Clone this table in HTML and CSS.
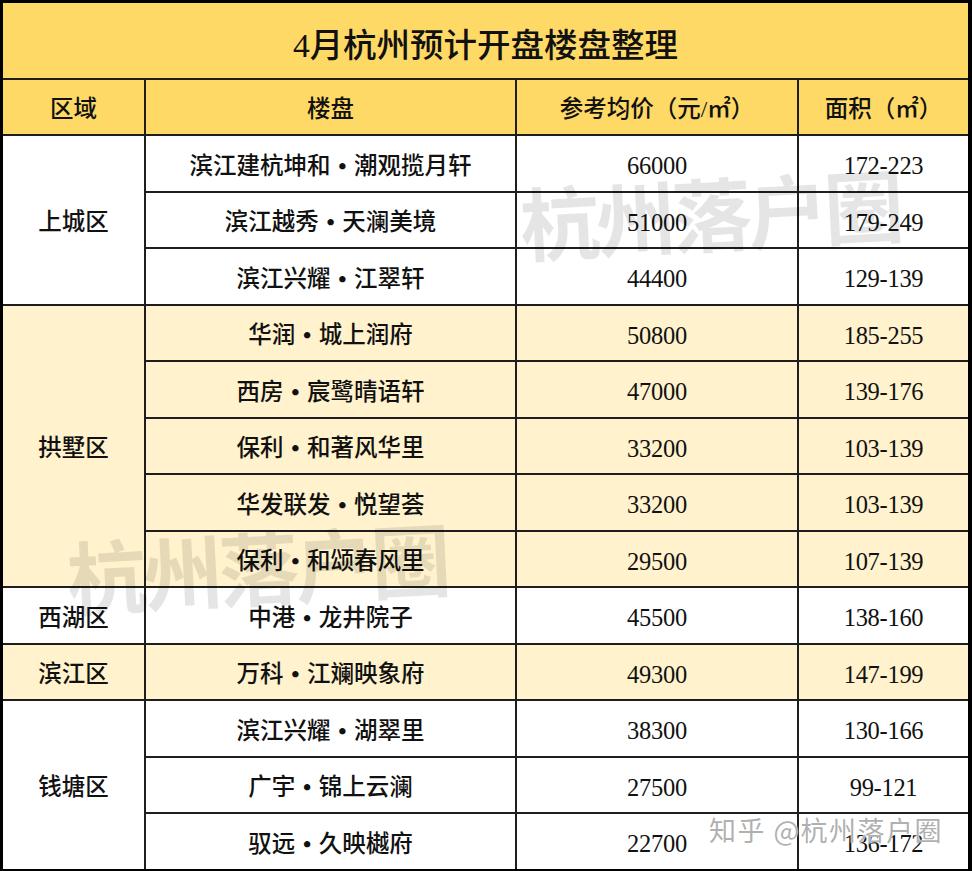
FILE: index.html
```html
<!DOCTYPE html>
<html lang="zh-CN">
<head>
<meta charset="utf-8">
<title>4月杭州预计开盘楼盘整理</title>
<link rel="stylesheet" href="styles.css">
</head>
<body>
<div class="sheet">
  <div class="cell title">4月杭州预计开盘楼盘整理</div>

  <div class="cell head">区域</div>
  <div class="cell head">楼盘</div>
  <div class="cell head">参考均价（元/㎡）</div>
  <div class="cell head">面积（㎡）</div>

  <div class="cell area span3">上城区</div>
  <div class="cell">滨江建杭坤和<span class="dot">•</span>潮观揽月轩</div>
  <div class="cell num">66000</div>
  <div class="cell num">172-223</div>
  <div class="cell">滨江越秀<span class="dot">•</span>天澜美境</div>
  <div class="cell num">51000</div>
  <div class="cell num">179-249</div>
  <div class="cell">滨江兴耀<span class="dot">•</span>江翠轩</div>
  <div class="cell num">44400</div>
  <div class="cell num">129-139</div>

  <div class="cell area span5 alt">拱墅区</div>
  <div class="cell alt">华润<span class="dot">•</span>城上润府</div>
  <div class="cell num alt">50800</div>
  <div class="cell num alt">185-255</div>
  <div class="cell alt">西房<span class="dot">•</span>宸鹭晴语轩</div>
  <div class="cell num alt">47000</div>
  <div class="cell num alt">139-176</div>
  <div class="cell alt">保利<span class="dot">•</span>和著风华里</div>
  <div class="cell num alt">33200</div>
  <div class="cell num alt">103-139</div>
  <div class="cell alt">华发联发<span class="dot">•</span>悦望荟</div>
  <div class="cell num alt">33200</div>
  <div class="cell num alt">103-139</div>
  <div class="cell alt">保利<span class="dot">•</span>和颂春风里</div>
  <div class="cell num alt">29500</div>
  <div class="cell num alt">107-139</div>

  <div class="cell area">西湖区</div>
  <div class="cell">中港<span class="dot">•</span>龙井院子</div>
  <div class="cell num">45500</div>
  <div class="cell num">138-160</div>

  <div class="cell area alt">滨江区</div>
  <div class="cell alt">万科<span class="dot">•</span>江斓映象府</div>
  <div class="cell num alt">49300</div>
  <div class="cell num alt">147-199</div>

  <div class="cell area span3">钱塘区</div>
  <div class="cell">滨江兴耀<span class="dot">•</span>湖翠里</div>
  <div class="cell num">38300</div>
  <div class="cell num">130-166</div>
  <div class="cell">广宇<span class="dot">•</span>锦上云澜</div>
  <div class="cell num">27500</div>
  <div class="cell num">99-121</div>
  <div class="cell">驭远<span class="dot">•</span>久映樾府</div>
  <div class="cell num">22700</div>
  <div class="cell num">136-172</div>

  <div class="mark mark-one">杭州落户圈</div>
  <div class="mark mark-two">杭州落户圈</div>
  <div class="credit">知乎 @杭州落户圈</div>
</div>
</body>
</html>
```

FILE: styles.css
```css
html, body {
  margin: 0;
  padding: 0;
  background: #ffffff;
}

.sheet {
  position: relative;
  box-sizing: border-box;
  width: 972px;
  height: 871px;
  display: grid;
  grid-template-columns: 141px 369px 280px 169px;
  grid-template-rows: 75px 54px repeat(13, 1fr);
  gap: 2px;
  background: #1e1e1e;
  border-style: solid;
  border-color: #000000;
  border-width: 3px 4px 2px 3px;
  overflow: hidden;
  font-family: "Liberation Serif", "Noto Sans CJK SC", serif;
  font-weight: 500;
  color: #111111;
}

.cell {
  display: flex;
  align-items: center;
  justify-content: center;
  box-sizing: border-box;
  padding-top: 6px;
  background: #ffffff;
  font-size: 23.5px;
  line-height: 1;
  white-space: nowrap;
}

.num {
  font-size: 24.5px;
  letter-spacing: -0.3px;
}

.title {
  grid-column: 1 / -1;
  background: #ffd966;
  font-size: 33.5px;
  padding-top: 10px;
}

.head {
  background: #ffd966;
}

.alt {
  background: #fff2cc;
}

.span3 {
  grid-row: span 3;
}

.span5 {
  grid-row: span 5;
}

.dot {
  display: inline-block;
  width: 1em;
  text-align: center;
  font-family: "Liberation Serif", serif;
  font-weight: 700;
}

.mark {
  position: absolute;
  font-family: "Noto Sans CJK SC", sans-serif;
  font-weight: 700;
  font-size: 80px;
  letter-spacing: -4px;
  line-height: 1;
  color: rgba(0, 0, 0, 0.1);
  transform: rotate(-3deg);
  transform-origin: left center;
  pointer-events: none;
  white-space: nowrap;
}

.mark-one {
  left: 517px;
  top: 178px;
}

.mark-two {
  left: 64px;
  top: 532px;
}

.credit {
  position: absolute;
  left: 706px;
  top: 811px;
  font-family: "Noto Sans CJK SC", sans-serif;
  font-weight: 400;
  font-size: 27px;
  letter-spacing: 1.5px;
  line-height: 1.2;
  color: rgba(150, 150, 150, 0.75);
  text-shadow: 0 0 2px #ffffff, 0 0 1px #ffffff;
  white-space: nowrap;
}
```
